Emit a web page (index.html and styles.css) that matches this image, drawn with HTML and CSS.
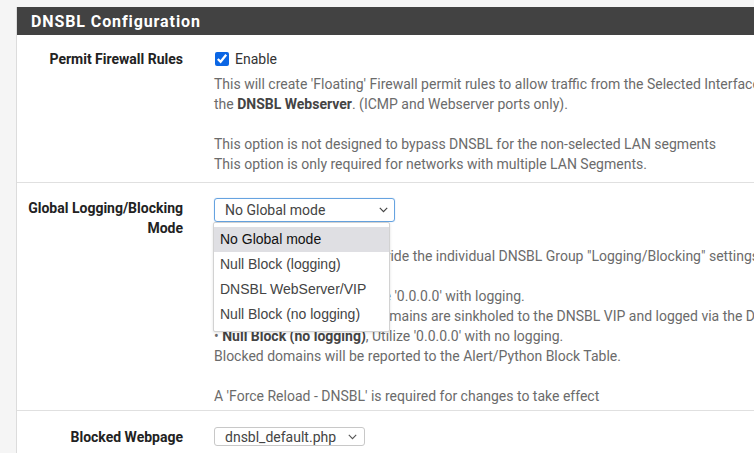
FILE: index.html
```html
<!DOCTYPE html>
<html>
<head>
<meta charset="utf-8">
<link rel="stylesheet" href="styles.css">
</head>
<body>
<div class="page">
  <div class="panel">
    <div class="panel-heading">DNSBL Configuration</div>
    <div class="row row-first">
      <div class="label">Permit Firewall Rules</div>
      <div class="content">
        <label class="check"><input type="checkbox" checked> Enable</label>
        <div class="help help-first">
          This will create 'Floating' Firewall permit rules to allow traffic from the Selected Interface(s) to access<br>
          the <b>DNSBL Webserver</b>. (ICMP and Webserver ports only).<br><br>
          This option is not designed to bypass DNSBL for the non-selected LAN segments<br>
          This option is only required for networks with multiple LAN Segments.
        </div>
      </div>
    </div>
    <div class="row row-second">
      <div class="label">Global Logging/Blocking<br>Mode</div>
      <div class="content">
        <div class="select-wrap">
          <div class="select focused">
            <span>No Global mode</span>
            <svg class="chev" width="9" height="6" viewBox="0 0 9 6"><path d="M0.8 0.9 L4.5 4.6 L8.2 0.9" fill="none" stroke="#444" stroke-width="1.2"/></svg>
          </div>
          <ul class="dropdown">
            <li class="active">No Global mode</li>
            <li>Null Block (logging)</li>
            <li>DNSBL WebServer/VIP</li>
            <li>Null Block (no logging)</li>
          </ul>
        </div>
        <div class="help help-second">
          Select the Global mode.<br>
          When enabled, this will override the individual DNSBL Group "Logging/Blocking" settings.<br><br>
          &bull; <b>Null Block (logging)</b>, Utilize '0.0.0.0' with logging.<br>
          &bull; <b>DNSBL WebServer/VIP</b>, Domains are sinkholed to the DNSBL VIP and logged via the DNSBL WebServer.<br>
          &bull; <b>Null Block (no logging)</b>, Utilize '0.0.0.0' with no logging.<br>
          Blocked domains will be reported to the Alert/Python Block Table.<br><br>
          A 'Force Reload - DNSBL' is required for changes to take effect
        </div>
      </div>
    </div>
    <div class="row row-third">
      <div class="label">Blocked Webpage</div>
      <div class="content">
        <div class="select small">
          <span>dnsbl_default.php</span>
          <svg class="chev" width="9" height="6" viewBox="0 0 9 6"><path d="M0.8 0.9 L4.5 4.6 L8.2 0.9" fill="none" stroke="#555" stroke-width="1.1"/></svg>
        </div>
      </div>
    </div>
  </div>
</div>
</body>
</html>
```

FILE: styles.css
```css
html, body {
  margin: 0;
  padding: 0;
}
body {
  background: #f5f5f5;
  font-family: Roboto, "Liberation Sans", sans-serif;
  font-size: 14px;
  color: #6b6b6b;
  overflow: hidden;
  width: 754px;
  height: 453px;
}
.page {
  padding: 7px 0 0 16px;
  overflow: hidden;
  height: 446px;
}
.panel {
  background: #fff;
  border-left: 1px solid #dcdcdc;
  min-height: 460px;
  overflow: hidden;
}
.panel-heading {
  background: #424242;
  color: #fff;
  font-weight: bold;
  font-size: 16px;
  letter-spacing: 0.9px;
  height: 28px;
  line-height: 29px;
  padding-left: 14px;
  white-space: nowrap;
}
.row {
  display: grid;
  grid-template-columns: 182px 1fr;
  border-bottom: 1px solid #e0e0e0;
}
.label {
  text-align: right;
  padding-right: 16px;
  font-weight: bold;
  color: #222;
  font-size: 14px;
  line-height: 20px;
}
.content {
  padding-left: 15px;
  line-height: 20px;
  white-space: nowrap;
  min-width: 0;
}
.row-first {
  padding: 14px 0 8px;
}
.row-second {
  padding: 15px 0 4px;
}
.row-third {
  padding: 16px 0 10px;
}
.check {
  display: flex;
  align-items: center;
  color: #333;
  gap: 6px;
  height: 20px;
}
.check input {
  margin: 0 0 0 1px;
  width: 14px;
  height: 14px;
  accent-color: #0b66e4;
}
.help b {
  color: #444;
}
.help-first {
  margin-top: 5px;
}
.select-wrap {
  position: relative;
}
.select {
  box-sizing: border-box;
  display: flex;
  align-items: center;
  justify-content: space-between;
  width: 181px;
  height: 24px;
  border: 1px solid #c8c8c8;
  border-radius: 3px;
  padding: 0 6px 0 10px;
  color: #444;
  font-size: 14px;
}
.select.focused {
  border-color: #66a3e0;
  box-shadow: 0 0 1px #8ab8ec;
}
.select.small {
  width: 151px;
  height: 19px;
  padding-right: 7px;
}
.chev {
  display: block;
}
.dropdown {
  position: absolute;
  left: -1px;
  top: 24px;
  width: 177px;
  box-sizing: border-box;
  margin: 0;
  padding: 4px 0;
  list-style: none;
  background: #fff;
  border: 1px solid #d2d2d2;
  border-radius: 2px;
  box-shadow: 0 1px 3px rgba(0,0,0,0.12);
  font-family: "Liberation Sans", Arial, sans-serif;
  font-size: 14px;
  color: #444;
  z-index: 2;
}
.dropdown li {
  height: 25px;
  line-height: 25px;
  padding-left: 6px;
}
.dropdown li.active {
  background: #dfdfe3;
  color: #111;
}
.help-second {
  margin-top: 4px;
}
```
